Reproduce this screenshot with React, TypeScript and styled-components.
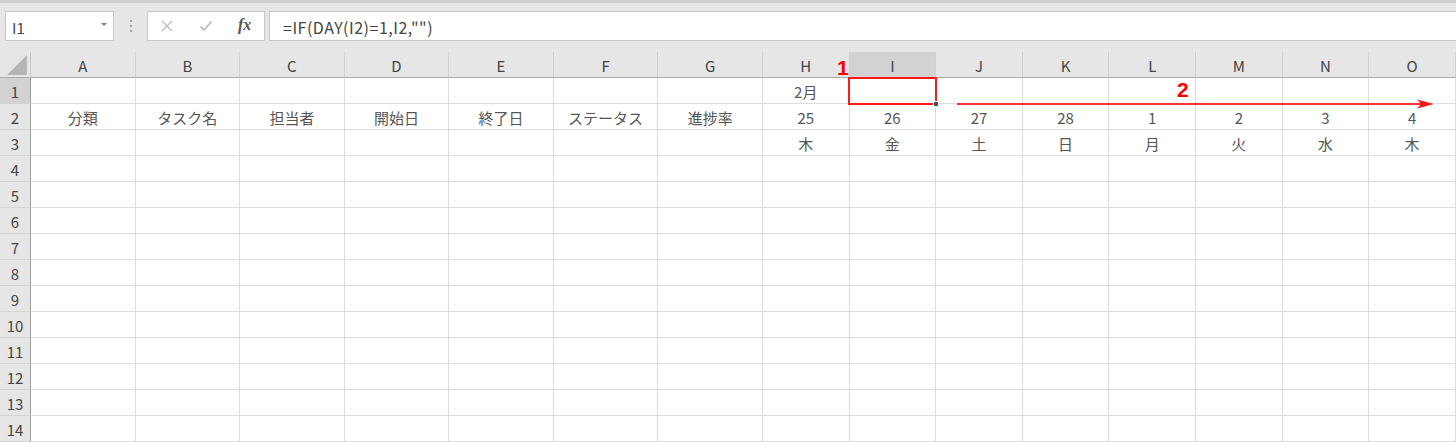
import React from "react";
import styled, { createGlobalStyle } from "styled-components";

const GlobalStyle = createGlobalStyle`
  html, body { margin: 0; padding: 0; background: #ffffff; }
  body { font-family: "Noto Sans CJK JP", "Noto Sans", sans-serif; }
  * { box-sizing: border-box; }
`;

const Page = styled.div`
  width: 1456px;
  height: 442px;
  overflow: hidden;
  background: #ffffff;
  display: flex;
  flex-direction: column;
`;

const TopStrip = styled.div`
  height: 3px;
  background: #cfcfcf;
  flex: none;
`;

const FormulaBar = styled.div`
  height: 49px;
  flex: none;
  background: #e6e6e6;
  display: flex;
  align-items: flex-start;
  padding: 8px 0 0 5px;
`;

const NameBox = styled.div`
  width: 109px;
  height: 30px;
  background: #ffffff;
  border: 1px solid #c6c6c6;
  display: flex;
  align-items: center;
  justify-content: space-between;
  padding: 2px 6px 0 6px;
  font-size: 15px;
  color: #444444;
`;

const DropArrow = styled.span`
  width: 0;
  height: 0;
  border-left: 3px solid transparent;
  border-right: 3px solid transparent;
  border-top: 3px solid #7a7a7a;
  margin-bottom: 5px;
`;

const Grip = styled.div`
  width: 33px;
  height: 30px;
  display: flex;
  flex-direction: column;
  align-items: center;
  justify-content: center;
  gap: 3px;
`;

const GripDot = styled.span`
  width: 2px;
  height: 2px;
  background: #a0a0a0;
`;

const ButtonsBox = styled.div`
  width: 118px;
  height: 30px;
  background: #ffffff;
  border: 1px solid #c6c6c6;
  display: flex;
  align-items: center;
  gap: 25px;
  padding: 0 0 0 12px;
  margin-right: 4px;
`;

const FxText = styled.span`
  font-family: "Liberation Serif", serif;
  font-style: italic;
  font-weight: bold;
  font-size: 16px;
  color: #555555;
  margin-top: -2px;
`;

const FormulaInput = styled.div`
  flex: 1;
  height: 30px;
  background: #ffffff;
  border: 1px solid #c6c6c6;
  border-right: none;
  display: flex;
  align-items: center;
  padding: 1px 0 0 13px;
  font-size: 16px;
  letter-spacing: 0.5px;
  color: #444444;
`;

const GridWrap = styled.div`
  position: relative;
  flex: 1;
`;

const Grid = styled.div`
  display: grid;
  grid-template-columns: 31px repeat(7, 104.571px) repeat(8, 86.625px);
  grid-auto-rows: 26px;
`;

const Corner = styled.div`
  background: #e6e6e6;
  border-right: 1px solid #c8c8c8;
  border-bottom: 1px solid #ababab;
  position: relative;
`;

const CornerTriangle = styled.svg`
  position: absolute;
  right: 3px;
  bottom: 2px;
`;

const ColHead = styled.div<{ $selected?: boolean }>`
  background: ${(p) => (p.$selected ? "#d2d2d2" : "#e6e6e6")};
  border-right: 1px solid #cfcfcf;
  border-bottom: 1px solid #ababab;
  display: flex;
  align-items: center;
  justify-content: center;
  font-size: 15px;
  color: #444444;
  padding-top: 1px;
`;

const RowHead = styled.div<{ $selected?: boolean }>`
  background: ${(p) => (p.$selected ? "#d2d2d2" : "#e6e6e6")};
  border-right: 1px solid #9e9e9e;
  border-bottom: 1px solid #d4d4d4;
  display: flex;
  align-items: center;
  justify-content: center;
  font-size: 15px;
  color: #444444;
  padding-top: 1px;
`;

const Cell = styled.div`
  background: #ffffff;
  border-right: 1px solid #dcdcdc;
  border-bottom: 1px solid #dcdcdc;
  display: flex;
  align-items: center;
  justify-content: center;
  font-size: 15px;
  color: #555555;
  padding-top: 1px;
  white-space: nowrap;
`;

const Selection = styled.div`
  position: absolute;
  left: 848px;
  top: 25px;
  width: 89px;
  height: 28px;
  border: 2px solid #ff1a1a;
  pointer-events: none;
  z-index: 2;
`;

const Handle = styled.span`
  position: absolute;
  right: -4px;
  bottom: -4px;
  width: 6px;
  height: 6px;
  background: #505050;
  border: 1px solid #ffffff;
`;

const Label = styled.span<{ $x: number; $y: number }>`
  position: absolute;
  left: ${(p) => p.$x}px;
  top: ${(p) => p.$y}px;
  font-family: "Liberation Sans", Arial, sans-serif;
  font-weight: bold;
  font-size: 21px;
  line-height: 1;
  color: #ff0000;
  z-index: 3;
`;

const Arrow = styled.svg`
  position: absolute;
  left: 955px;
  top: 46px;
  z-index: 3;
`;

const cols = ["A", "B", "C", "D", "E", "F", "G", "H", "I", "J", "K", "L", "M", "N", "O"];

const data: Record<number, string[]> = {
  1: ["", "", "", "", "", "", "", "2月", "", "", "", "", "", "", ""],
  2: ["分類", "タスク名", "担当者", "開始日", "終了日", "ステータス", "進捗率", "25", "26", "27", "28", "1", "2", "3", "4"],
  3: ["", "", "", "", "", "", "", "木", "金", "土", "日", "月", "火", "水", "木"],
};

const rows = Array.from({ length: 14 }, (_, i) => i + 1);

export default function App() {
  return (
    <>
      <GlobalStyle />
      <Page>
        <TopStrip />
        <FormulaBar>
          <NameBox>
            <span>I1</span>
            <DropArrow />
          </NameBox>
          <Grip>
            <GripDot />
            <GripDot />
            <GripDot />
          </Grip>
          <ButtonsBox>
            <svg width="14" height="14" viewBox="0 0 14 14">
              <path d="M2 2 L12 12 M12 2 L2 12" stroke="#bdbdbd" strokeWidth="1.4" fill="none" />
            </svg>
            <svg width="14" height="12" viewBox="0 0 14 12">
              <path d="M1.5 6.5 L5 10 L12.5 1.5" stroke="#bdbdbd" strokeWidth="1.8" fill="none" />
            </svg>
            <FxText>fx</FxText>
          </ButtonsBox>
          <FormulaInput>=IF(DAY(I2)=1,I2,"")</FormulaInput>
        </FormulaBar>
        <GridWrap>
          <Grid>
            <Corner>
              <CornerTriangle width="20" height="20" viewBox="0 0 20 20">
                <polygon points="20,0 20,20 0,20" fill="#b5b5b5" />
              </CornerTriangle>
            </Corner>
            {cols.map((c) => (
              <ColHead key={c} $selected={c === "I"}>
                {c}
              </ColHead>
            ))}
            {rows.map((r) => (
              <React.Fragment key={r}>
                <RowHead $selected={r === 1}>{r}</RowHead>
                {cols.map((c, ci) => (
                  <Cell key={c}>{data[r] ? data[r][ci] : ""}</Cell>
                ))}
              </React.Fragment>
            ))}
          </Grid>
          <Selection>
            <Handle />
          </Selection>
          <Label $x={837} $y={5}>1</Label>
          <Label $x={1177} $y={27}>2</Label>
          <Arrow width="482" height="12" viewBox="0 0 482 12">
            <line x1="2" y1="6" x2="468" y2="6" stroke="#ff3030" strokeWidth="2" />
            <polygon points="462,1.5 479,6 462,10.5 466,6" fill="#ff1a1a" />
          </Arrow>
        </GridWrap>
      </Page>
    </>
  );
}
